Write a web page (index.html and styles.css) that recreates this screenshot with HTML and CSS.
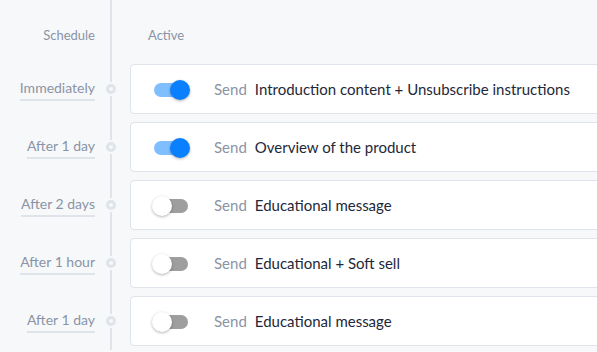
FILE: index.html
```html
<!DOCTYPE html>
<html>
<head>
    <title>Drip Schedule</title>
    <link rel="stylesheet" href="styles.css">
</head>
<body>
    <div class="sequence">
        <div class="row head-row">
            <div class="when"><span class="col-title">Schedule</span></div>
            <div class="rail"><span class="line"></span></div>
            <div class="col-title active-title">Active</div>
        </div>

        <div class="row">
            <div class="when"><span class="delay">Immediately</span></div>
            <div class="rail"><span class="line"></span><span class="dot"></span><span class="line"></span></div>
            <div class="card">
                <span class="switch on"><span class="track"></span><span class="thumb"></span></span>
                <span class="send">Send</span>
                <span class="subject">Introduction content + Unsubscribe instructions</span>
            </div>
        </div>

        <div class="row">
            <div class="when"><span class="delay">After 1 day</span></div>
            <div class="rail"><span class="line"></span><span class="dot"></span><span class="line"></span></div>
            <div class="card">
                <span class="switch on"><span class="track"></span><span class="thumb"></span></span>
                <span class="send">Send</span>
                <span class="subject">Overview of the product</span>
            </div>
        </div>

        <div class="row">
            <div class="when"><span class="delay">After 2 days</span></div>
            <div class="rail"><span class="line"></span><span class="dot"></span><span class="line"></span></div>
            <div class="card">
                <span class="switch"><span class="track"></span><span class="thumb"></span></span>
                <span class="send">Send</span>
                <span class="subject">Educational message</span>
            </div>
        </div>

        <div class="row">
            <div class="when"><span class="delay">After 1 hour</span></div>
            <div class="rail"><span class="line"></span><span class="dot"></span><span class="line"></span></div>
            <div class="card">
                <span class="switch"><span class="track"></span><span class="thumb"></span></span>
                <span class="send">Send</span>
                <span class="subject">Educational + Soft sell</span>
            </div>
        </div>

        <div class="row">
            <div class="when"><span class="delay">After 1 day</span></div>
            <div class="rail"><span class="line"></span><span class="dot"></span><span class="line"></span></div>
            <div class="card">
                <span class="switch"><span class="track"></span><span class="thumb"></span></span>
                <span class="send">Send</span>
                <span class="subject">Educational message</span>
            </div>
        </div>
    </div>
</body>
</html>
```

FILE: styles.css
```css
body {
    margin: 0;
    background-color: #f6f8fa;
    font-family: Lato, "Open Sans", sans-serif;
    overflow: hidden;
}
.sequence {
    display: flex;
    flex-direction: column;
}
.row {
    display: flex;
    align-items: stretch;
    height: 58px;
    padding: 4px 0;
    box-sizing: border-box;
}
.head-row {
    height: 60px;
    padding: 0;
    align-items: center;
}
.head-row .when,
.head-row .active-title {
    padding-top: 10px;
}
.when {
    width: 95px;
    display: flex;
    justify-content: flex-end;
    align-items: center;
}
.col-title {
    font-size: 13px;
    color: #8a94a6;
}
.active-title {
    margin-left: 18px;
}
.delay {
    font-size: 14px;
    color: #8a94a6;
    padding-bottom: 3px;
    border-bottom: 2px solid #dfe4eb;
    margin-top: 1px;
}
.rail {
    width: 35px;
    align-self: stretch;
    margin: -4px 0;
    display: flex;
    flex-direction: column;
    align-items: center;
    padding-right: 3px;
    box-sizing: border-box;
}
.head-row .rail {
    margin: 0;
    height: 60px;
}
.line {
    flex: 1;
    width: 2px;
    background-color: #dfe4eb;
}
.dot {
    width: 10px;
    height: 10px;
    border: 3px solid #dfe4eb;
    border-radius: 50%;
    box-sizing: border-box;
    margin: 2px 0;
}
.card {
    flex: 1;
    margin-right: -10px;
    display: flex;
    align-items: center;
    background-color: #ffffff;
    border: 1px solid #dfe4eb;
    border-radius: 4px;
    padding-left: 21px;
}
.switch {
    position: relative;
    width: 38px;
    height: 20px;
    margin-right: 24px;
    margin-top: 1px;
}
.track {
    position: absolute;
    left: 2px;
    top: 3px;
    width: 34px;
    height: 14px;
    border-radius: 7px;
    background-color: #9e9e9e;
}
.thumb {
    position: absolute;
    left: 0;
    top: 0;
    width: 20px;
    height: 20px;
    border-radius: 50%;
    background-color: #ffffff;
    box-shadow: 0 1px 3px rgba(0, 0, 0, 0.3);
}
.switch.on .track {
    background-color: #80bfff;
}
.switch.on .thumb {
    left: 18px;
    background-color: #0a80ff;
}
.send {
    font-size: 15px;
    color: #8a94a6;
    margin-right: 8px;
}
.subject {
    font-size: 15px;
    color: #1e2838;
    margin-top: -1px;
}
```
